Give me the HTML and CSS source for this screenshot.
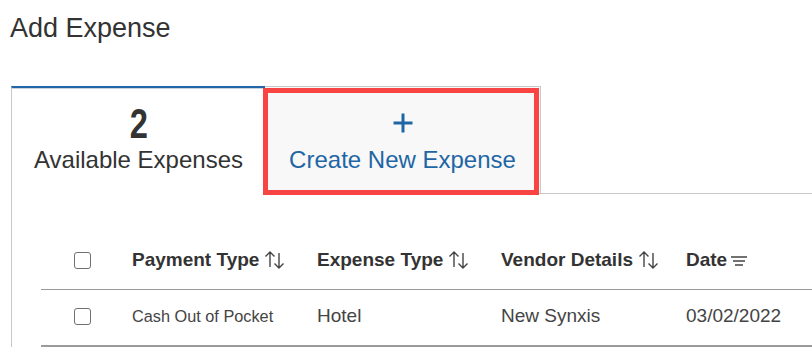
FILE: index.html
```html
<!DOCTYPE html>
<html lang="en">
<head>
  <meta charset="UTF-8">
  <meta name="viewport" content="width=device-width, initial-scale=1.0">
  <title>Add Expense</title>
  <link rel="stylesheet" href="styles.css">
</head>
<body>
  <h1 class="page-title">Add Expense</h1>

  <div class="expense-card">
    <div class="tab-row">
      <div class="tab tab-active">
        <div class="tab-count"><span>2</span></div>
        <div class="tab-label">Available Expenses</div>
      </div>
      <button class="tab tab-create" type="button">
        <svg class="plus-icon" width="22" height="22" viewBox="0 0 22 22">
          <path d="M11 1.5v19M1.5 11h19" stroke="#1f66a5" stroke-width="3" fill="none"/>
        </svg>
        <span class="tab-label">Create New Expense</span>
      </button>
      <div class="tab-fill"></div>
    </div>

    <div class="panel">
      <table class="expense-table">
        <colgroup>
          <col style="width: 91px">
          <col style="width: 185px">
          <col style="width: 184px">
          <col style="width: 185px">
          <col>
        </colgroup>
        <thead>
          <tr>
            <th class="check-cell"><span class="checkbox"></span></th>
            <th>Payment Type<svg class="sort-icon" width="22" height="20" viewBox="0 0 22 20"><path d="M6 2v15M1.5 6.5L6 2l4.5 4.5M15 3v15M10.5 13.5L15 18l4.5-4.5" stroke="#444" stroke-width="1.4" fill="none"/></svg></th>
            <th>Expense Type<svg class="sort-icon" width="22" height="20" viewBox="0 0 22 20"><path d="M6 2v15M1.5 6.5L6 2l4.5 4.5M15 3v15M10.5 13.5L15 18l4.5-4.5" stroke="#444" stroke-width="1.4" fill="none"/></svg></th>
            <th>Vendor Details<svg class="sort-icon" width="22" height="20" viewBox="0 0 22 20"><path d="M6 2v15M1.5 6.5L6 2l4.5 4.5M15 3v15M10.5 13.5L15 18l4.5-4.5" stroke="#444" stroke-width="1.4" fill="none"/></svg></th>
            <th>Date<svg class="filter-icon" width="18" height="10" viewBox="0 0 18 10"><path d="M1 1h16M3 5h12M5 9h8" stroke="#444" stroke-width="1.3" fill="none"/></svg></th>
          </tr>
        </thead>
        <tbody>
          <tr>
            <td class="check-cell"><span class="checkbox"></span></td>
            <td class="small-text">Cash Out of Pocket</td>
            <td>Hotel</td>
            <td>New Synxis</td>
            <td>03/02/2022</td>
          </tr>
        </tbody>
      </table>
    </div>
  </div>
</body>
</html>
```

FILE: styles.css
```css
body {
  font-family: "Liberation Sans", Arial, sans-serif;
  margin: 0;
  padding: 0;
  background: #fff;
  color: #333;
  overflow: hidden;
}
.page-title {
  margin: 0;
  padding: 13px 0 0 10px;
  font-size: 27px;
  font-weight: normal;
  line-height: 30px;
  color: #333;
}
.expense-card {
  margin: 43px 0 0 11px;
}
.tab-row {
  display: flex;
  height: 108px;
}
.tab {
  box-sizing: border-box;
  height: 108px;
  display: flex;
  flex-direction: column;
  align-items: center;
}
.tab-label {
  display: block;
  font-size: 24px;
  line-height: 28px;
  white-space: nowrap;
}
.tab-active {
  width: 254px;
  border-left: 1px solid #c8c8c8;
  border-top: 2px solid #2266a8;
  box-shadow: inset 0 1px 0 #c9d3dd;
  padding-top: 15px;
  color: #333;
}
.tab-count {
  font-size: 43px;
  font-weight: bold;
  line-height: 40px;
}
.tab-count span {
  display: inline-block;
  transform: scaleX(0.76);
}
.tab-active .tab-label {
  margin-top: 3px;
}
.tab-create {
  position: relative;
  width: 276px;
  margin: 0;
  padding: 25px 0 0;
  font-family: inherit;
  background: #f8f8f8;
  color: #1f66a5;
  border: none;
  border-top: 1px solid #c8c8c8;
  border-right: 1px solid #c8c8c8;
  border-bottom: 1px solid #c8c8c8;
  cursor: pointer;
}
.tab-create::after {
  content: "";
  position: absolute;
  left: -2px;
  top: 1px;
  right: 1px;
  bottom: -2px;
  border: 5px solid #f94444;
}
.plus-icon {
  display: block;
  margin-bottom: 12px;
}
.tab-fill {
  flex: 1;
  box-sizing: border-box;
  border-bottom: 1px solid #c8c8c8;
}
.panel {
  border-left: 1px solid #c8c8c8;
  padding: 40px 0 0 29px;
  height: 113px;
}
.expense-table {
  width: 100%;
  table-layout: fixed;
  border-collapse: collapse;
  font-size: 19px;
  line-height: 22px;
  color: #444;
}
.expense-table th {
  text-align: left;
  font-weight: bold;
  color: #333;
  padding: 15px 0 18px;
  border-bottom: 1px solid #9a9a9a;
  white-space: nowrap;
  vertical-align: middle;
}
.expense-table td {
  padding: 15px 0 18px;
  border-bottom: 2px solid #9a9a9a;
  white-space: nowrap;
  vertical-align: middle;
}
.expense-table .check-cell {
  padding-left: 33px;
}
.checkbox {
  display: block;
  box-sizing: border-box;
  width: 17px;
  height: 17px;
  border: 1px solid #707070;
  border-radius: 3px;
  background: #fff;
}
.small-text {
  font-size: 16.3px;
}
.sort-icon {
  vertical-align: -4px;
  margin-left: 5px;
}
.filter-icon {
  vertical-align: 0;
  margin-left: 3px;
}
```
